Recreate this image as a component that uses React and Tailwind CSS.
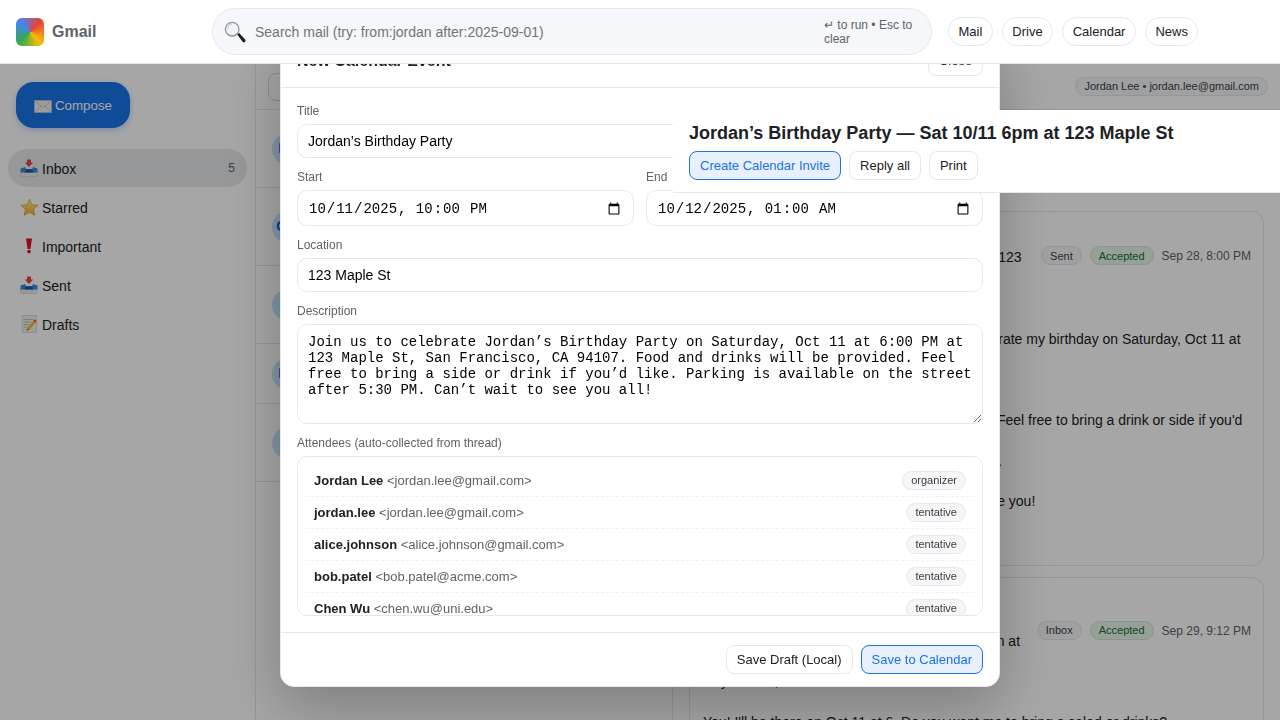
import React from "react";

const sans = { fontFamily: "'Liberation Sans', Arial, sans-serif" };

function TrayIcon() {
  return (
    <svg width="18" height="18" viewBox="0 0 18 18">
      <rect x=".5" y="12" width="17" height="5.5" rx="1" fill="#ececec" stroke="#c4c4c4" strokeWidth=".5" />
      <path d="M.5 9.6 5 8l1 2.2h6L13 8l4.5 1.6V13.4H.5z" fill="#3a8ad4" />
      <path d="M4.6 13.4 6 10.2h6l1.4 3.2z" fill="#1c5c9c" />
      <path d="M7 .4h4v3h2.2L9 8 4.8 3.4H7z" fill="#e8423c" />
    </svg>
  );
}

function StarIcon() {
  return (
    <svg width="19" height="19" viewBox="0 0 20 20">
      <defs>
        <linearGradient id="star" x1="0" y1="0" x2="0" y2="1">
          <stop offset="0" stopColor="#fff0a8" />
          <stop offset="1" stopColor="#f2ae22" />
        </linearGradient>
      </defs>
      <path d="M10 1.2l2.6 5.9 6.4.6-4.8 4.2 1.5 6.3L10 15l-5.7 3.2 1.5-6.3L1 7.7l6.4-.6z" fill="url(#star)" stroke="#d99a1e" strokeWidth=".7" strokeLinejoin="round" />
    </svg>
  );
}

function BangIcon() {
  return (
    <svg width="18" height="18" viewBox="0 0 18 18">
      <path d="M6 1.5h6L10.4 12H7.6z" fill="#e0141b" />
      <circle cx="9" cy="14.6" r="1.8" fill="#e0141b" />
    </svg>
  );
}

function MemoIcon() {
  return (
    <svg width="18" height="18" viewBox="0 0 18 18">
      <rect x="2" y=".5" width="14.5" height="17" fill="#f2f0e6" stroke="#c4c2b8" strokeWidth=".5" />
      <path d="M3.8 4.5h9M3.8 7h7M3.8 9.5h5M3.8 12h3.5" stroke="#a8a8a8" strokeWidth=".7" />
      <path d="M14.4 4.4l2.2 1.8-7 8.4-2.8 1 .6-2.9z" fill="#f4b53a" />
      <path d="M14.4 4.4l2.2 1.8-1 1.2-2.2-1.8z" fill="#e0524a" />
      <path d="M6.8 15.6l.3-1.6 1.4 1z" fill="#333" />
    </svg>
  );
}

function MailIcon() {
  return (
    <svg width="18" height="13" viewBox="0 0 18 13" className="mt-0.5">
      <rect x=".5" y=".5" width="17" height="12" fill="#f1f1f1" stroke="#c8c8c8" strokeWidth=".6" />
      <path d="M.8.8 9 7.6 17.2.8M.8 12.2 7 6M17.2 12.2 11 6" fill="none" stroke="#bcbcbc" strokeWidth=".7" />
    </svg>
  );
}

function LensIcon() {
  return (
    <svg width="22" height="22" viewBox="0 0 22 22">
      <path d="M13.2 13.6l1.9-1.6 6 6.5a1.7 1.7 0 0 1-2.5 2.3z" fill="#1d1d1f" />
      <circle cx="8.2" cy="8.2" r="6.8" fill="#eef3f8" stroke="#8f9499" strokeWidth="1.3" />
      <path d="M3.6 7.8a4.6 4.6 0 0 1 4.4-4.4" fill="none" stroke="#c6ccd2" strokeWidth="1" />
    </svg>
  );
}

function Pill({ children }) {
  return (
    <button className="h-[29px] px-[9.5px] rounded-full border border-[#e5e7eb] bg-white text-[13px] text-[#202124]">
      {children}
    </button>
  );
}

function TopBar() {
  return (
    <header className="relative z-50 h-16 shrink-0 flex items-center bg-white border-b border-[#e5e7eb] px-4">
      <div className="w-[196px] shrink-0 flex items-center gap-2">
        <div className="w-7 h-7 rounded-md bg-[conic-gradient(from_315deg,#4285f4_0deg,#ea4335_90deg,#fbbc05_180deg,#34a853_270deg,#4285f4_360deg)]" />
        <span className="text-base font-bold text-[#5f6368]">Gmail</span>
      </div>
      <div className="w-[720px] h-[47px] shrink-0 flex items-center rounded-full bg-[#f5f7fb] border border-[#e5e7eb] pl-[11px] pr-[16px]">
        <LensIcon />
        <span className="ml-[9px] flex-1 text-sm text-[#70757a]">Search mail (try: from:jordan after:2025-09-01)</span>
        <span className="w-[91px] text-xs leading-[14px] text-[#5f6368]">↵ to run • Esc to clear</span>
      </div>
      <nav className="ml-4 flex gap-[9px]">
        <Pill>Mail</Pill>
        <Pill>Drive</Pill>
        <Pill>Calendar</Pill>
        <Pill>News</Pill>
      </nav>
    </header>
  );
}

const folders = [
  { name: "Inbox", icon: <TrayIcon />, count: 5, active: true },
  { name: "Starred", icon: <StarIcon /> },
  { name: "Important", icon: <BangIcon /> },
  { name: "Sent", icon: <TrayIcon /> },
  { name: "Drafts", icon: <MemoIcon /> },
];

function Sidebar() {
  return (
    <aside className="w-[256px] shrink-0 border-r border-[#e5e7eb] pt-[18px] px-2">
      <button className="ml-2 h-[46px] w-[114px] flex items-center justify-center gap-[3px] rounded-[18px] bg-[#1a73e8] text-[13.33px] text-white shadow-[0_2px_6px_rgba(26,115,232,0.3)]">
        <MailIcon />
        <span className="pt-0.5">Compose</span>
      </button>
      <ul className="mt-[21px] w-[239px] flex flex-col gap-px">
        {folders.map((f) => (
          <li
            key={f.name}
            className={`h-[38px] flex items-center pl-3 pr-3 rounded-[19px] text-sm text-[#202124] ${f.active ? "bg-[#e8eaed]" : ""}`}
          >
            <span className="w-[22px] flex justify-start">{f.icon}</span>
            <span className="flex-1 pt-0.5">{f.name}</span>
            {f.count && <span className="text-xs text-[#5f6368]">{f.count}</span>}
          </li>
        ))}
      </ul>
    </aside>
  );
}

const threads = [
  { h: "h-[78px]", initials: "BP" },
  { h: "h-[78px]", initials: "CW" },
  { h: "h-[78px]", initials: "JL" },
  { h: "h-[60px]", initials: "BP" },
  { h: "h-[78px]", initials: "" },
];

function ThreadList() {
  return (
    <section className="w-[417px] shrink-0 border-r border-[#e5e7eb]">
      <div className="h-[46px] flex items-center px-3 border-b border-[#e5e7eb]">
        <div className="w-[120px] h-7 rounded-lg border border-[#d5d8dc]" />
      </div>
      {threads.map((t, i) => (
        <div key={i} className={`${t.h} flex items-center px-4 border-b border-[#e5e7eb]`}>
          <div className="w-8 h-8 rounded-full bg-[#c2e7ff] flex items-center justify-center text-[14px] font-bold text-[#0b57d0]">
            {t.initials}
          </div>
        </div>
      ))}
    </section>
  );
}

function Chip({ children, green }) {
  return (
    <span
      className={`h-[19px] px-2 flex items-center rounded-full border text-[11px] ${green ? "bg-[#e6f4ea] border-[#cfe8d6] text-[#137333]" : "bg-[#f5f6f8] border-[#e5e7eb] text-[#3c4043]"}`}
    >
      {children}
    </span>
  );
}

function Btn({ children, primary }) {
  return (
    <button
      className={`h-[29px] px-[10px] rounded-lg border text-[13px] ${primary ? "bg-[#e8f0fe] border-[#1a73e8] text-[#1a73e8]" : "bg-white border-[#e5e7eb] text-[#202124]"}`}
    >
      {children}
    </button>
  );
}

const bodyOne = `Hi everyone,

I'd like to invite you all over to my place to celebrate my birthday on Saturday, Oct 11 at
6:00 PM at my home.

We will be at 123 Maple St.
Food and drinks will be provided by the family.  Feel free to bring a drink or side if you'd
like to share some with the rest.
Parking is available after 5:30 PM (check signs).

Please let us know if you can come. Hope to see you!`;

function MessageCard({ lines, chip, date, body, className, bodyCls = "" }) {
  return (
    <article className={`rounded-xl border border-[#e5e7eb] pl-[13px] pr-3 ${className}`}>
      <div className="flex items-center">
        <div className="flex-1 min-w-0 text-sm leading-[18.5px] text-[#202124] whitespace-nowrap">
          {lines.map((l) => (
            <div key={l}>{l}</div>
          ))}
        </div>
        <div className="shrink-0 flex items-center gap-2 mb-[2px]">
          <Chip>{chip}</Chip>
          <Chip green>Accepted</Chip>
          <span className="text-xs text-[#5f6368] whitespace-nowrap">{date}</span>
        </div>
      </div>
      <div className={`whitespace-pre text-sm leading-[20.3px] text-[#202124] ${bodyCls}`}>{body}</div>
    </article>
  );
}

function Detail() {
  return (
    <section className="flex-1 min-w-0">
      <div className="h-[46px] flex items-center justify-end px-3 border-b border-[#e5e7eb]">
        <span className="h-[19px] px-2 flex items-center rounded-full border border-[#e5e7eb] bg-[#f5f6f8] text-[11px] text-[#3c4043]">
          Jordan Lee • jordan.lee@gmail.com
        </span>
      </div>
      <div className="relative z-50 h-[83px] bg-white border-b border-[#e5e7eb] px-4 pt-[11px]">
        <h1 className="text-lg leading-[24px] font-bold text-[#202124]">
          Jordan’s Birthday Party — Sat 10/11 6pm at 123 Maple St
        </h1>
        <div className="mt-[6px] flex gap-2">
          <Btn primary>Create Calendar Invite</Btn>
          <Btn>Reply all</Btn>
          <Btn>Print</Btn>
        </div>
      </div>
      <div className="pt-[18px] px-4 flex flex-col gap-[11px] w-[607px]">
        <MessageCard
          className="h-[355px] pt-[17px]"
          bodyCls="pt-1"
          lines={["Jordan Lee", "to me, alice, bob, chen: Birthday party, 10/11 at 123", "Maple St"]}
          chip="Sent"
          date="Sep 28, 8:00 PM"
          body={bodyOne}
        />
        <MessageCard
          className="h-[200px] pt-[35px]"
          bodyCls="pt-px"
          lines={["Alice Johnson", "Re: Jordan's Birthday Party at 6pm - count me in at"]}
          chip="Inbox"
          date="Sep 29, 9:12 PM"
          body={"\nHey Jordan,\n\nYou! I'll be there on Oct 11 at 6. Do you want me to bring a salad or drinks?"}
        />
      </div>
    </section>
  );
}

const inputCls = "w-full rounded-[10px] border border-[#e5e7eb] bg-white px-[10px] text-sm text-black outline-none";
const dateCls = "h-9 pt-[2px] [&::-webkit-datetime-edit-ampm-field]:ml-[4px]";
const monoStyle = { fontFamily: "'Liberation Mono', monospace" };

function Field({ label, children, className = "" }) {
  return (
    <label className={`block ${className}`}>
      <span className="block h-4 mb-[6px] text-xs leading-[18px] text-[#5f6368]">{label}</span>
      {children}
    </label>
  );
}

const attendees = [
  ["Jordan Lee", "jordan.lee@gmail.com", "organizer"],
  ["jordan.lee", "jordan.lee@gmail.com", "tentative"],
  ["alice.johnson", "alice.johnson@gmail.com", "tentative"],
  ["bob.patel", "bob.patel@acme.com", "tentative"],
  ["Chen Wu", "chen.wu@uni.edu", "tentative"],
];

function EventModal() {
  return (
    <div className="fixed left-[280px] top-[34px] z-40 w-[720px] h-[653px] flex flex-col rounded-[14px] bg-white border border-[#e5e7eb] shadow-[0_20px_60px_rgba(0,0,0,0.25)]">
      <div className="h-[53px] shrink-0 flex items-center justify-between border-b border-[#e5e7eb] px-4">
        <h2 className="text-base font-bold text-[#202124]">New Calendar Event</h2>
        <button className="h-[29px] w-[55px] rounded-lg border border-[#e5e7eb] text-[13px] text-[#202124]">Close</button>
      </div>
      <div className="flex-1 min-h-0 px-4 pt-[14px] flex flex-col gap-[10px]">
        <Field label="Title">
          <input className={`${inputCls} h-[34px]`} defaultValue="Jordan’s Birthday Party" />
        </Field>
        <div className="grid grid-cols-2 gap-3">
          <Field label="Start">
            <input type="datetime-local" className={`${inputCls} ${dateCls}`} style={monoStyle} defaultValue="2025-10-11T22:00" />
          </Field>
          <Field label="End">
            <input type="datetime-local" className={`${inputCls} ${dateCls}`} style={monoStyle} defaultValue="2025-10-12T01:00" />
          </Field>
        </div>
        <Field label="Location">
          <input className={`${inputCls} h-[34px]`} defaultValue="123 Maple St" />
        </Field>
        <Field label="Description">
          <textarea
            className={`${inputCls} block h-[100px] py-[9px]`}
            style={{ ...monoStyle, lineHeight: "normal" }}
            defaultValue="Join us to celebrate Jordan’s Birthday Party on Saturday, Oct 11 at 6:00 PM at 123 Maple St, San Francisco, CA 94107. Food and drinks will be provided. Feel free to bring a side or drink if you’d like. Parking is available on the street after 5:30 PM. Can’t wait to see you all!"
          />
        </Field>
        <div>
          <div className="h-4 mb-[6px] text-xs leading-[18px] text-[#5f6368]">Attendees (auto-collected from thread)</div>
          <div className="h-40 overflow-hidden rounded-[10px] border border-[#e5e7eb] p-2">
            {attendees.map(([name, email, role]) => (
              <div key={name} className="h-8 flex items-center justify-between px-2 border-b border-dashed border-[#eeeff1] text-[13px]">
                <span className="text-[#5f6368]">
                  <b className="text-[#202124]">{name}</b> &lt;{email}&gt;
                </span>
                <span className="h-[19px] px-2 flex items-center rounded-full border border-[#e5e7eb] bg-[#f5f6f8] text-[11px] text-[#3c4043]">
                  {role}
                </span>
              </div>
            ))}
          </div>
        </div>
      </div>
      <div className="h-[54px] shrink-0 flex items-center justify-end gap-2 border-t border-[#e5e7eb] px-4">
        <Btn>Save Draft (Local)</Btn>
        <Btn primary>Save to Calendar</Btn>
      </div>
    </div>
  );
}

export default function App() {
  return (
    <div className="h-screen flex flex-col overflow-hidden bg-white" style={sans}>
      <TopBar />
      <main className="flex flex-1 min-h-0">
        <Sidebar />
        <ThreadList />
        <Detail />
      </main>
      <div className="fixed inset-0 z-30 bg-black/35" />
      <EventModal />
    </div>
  );
}
